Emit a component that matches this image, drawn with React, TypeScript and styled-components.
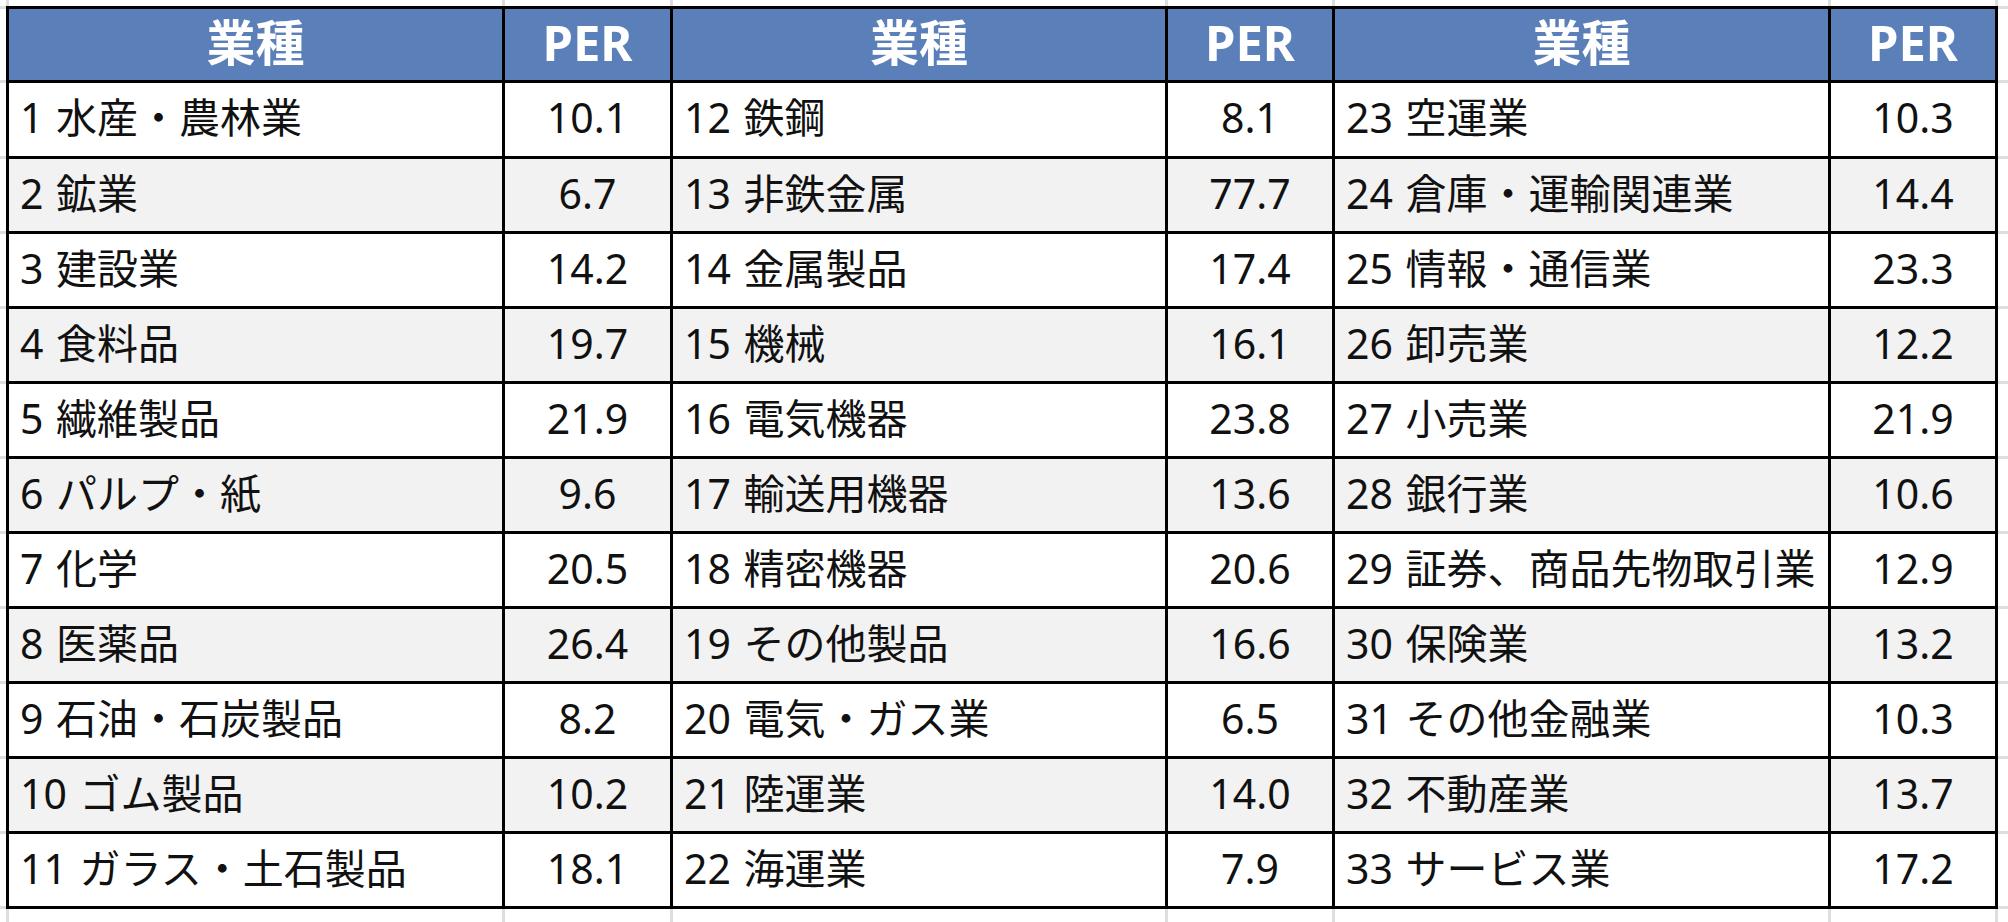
import React from "react";
import styled, { createGlobalStyle } from "styled-components";

const GlobalStyle = createGlobalStyle`
  html, body {
    margin: 0;
    padding: 0;
    background: #ffffff;
    overflow: hidden;
  }
  body {
    font-family: "Noto Sans", "Noto Sans CJK JP", sans-serif;
  }
`;

const COLS = "493px 165px 492px 164px 493px 164px";

const Sheet = styled.div`
  display: grid;
  width: 2008px;
  height: 922px;
  background: #dedede;
  gap: 3px;
  grid-template-columns: 6px ${COLS} 1fr;
  grid-template-rows: 6px 71px 73px repeat(10, 72px) 1fr;
  overflow: hidden;
`;

const Filler = styled.div`
  background: #ffffff;
`;

const Table = styled.div`
  grid-column: 2 / 8;
  grid-row: 2 / 14;
  margin: -3px;
  display: grid;
  padding: 3px;
  gap: 3px;
  background: #000000;
  grid-template-columns: ${COLS};
  grid-template-rows: 71px 73px repeat(10, 72px);
`;

const HeaderCell = styled.div`
  background: #5b7fb9;
  color: #ffffff;
  font-weight: 700;
  font-size: 49px;
  line-height: 1;
  display: flex;
  align-items: center;
  justify-content: center;
  padding-bottom: 4px;
  box-sizing: border-box;
`;

const Cell = styled.div<{ $alt: boolean }>`
  background: ${(p) => (p.$alt ? "#f2f2f2" : "#ffffff")};
  color: #111111;
  font-size: 41px;
  line-height: 1;
  display: flex;
  align-items: center;
  white-space: nowrap;
  overflow: hidden;
  box-sizing: border-box;
  padding-bottom: 4px;
`;

const NameCell = styled(Cell)`
  justify-content: flex-start;
  padding-left: 11px;
  word-spacing: 2px;
`;

const ValueCell = styled(Cell)`
  justify-content: center;
`;

type Row = [string, string];

const groups: Row[][] = [
  [
    ["1 水産・農林業", "10.1"],
    ["2 鉱業", "6.7"],
    ["3 建設業", "14.2"],
    ["4 食料品", "19.7"],
    ["5 繊維製品", "21.9"],
    ["6 パルプ・紙", "9.6"],
    ["7 化学", "20.5"],
    ["8 医薬品", "26.4"],
    ["9 石油・石炭製品", "8.2"],
    ["10 ゴム製品", "10.2"],
    ["11 ガラス・土石製品", "18.1"],
  ],
  [
    ["12 鉄鋼", "8.1"],
    ["13 非鉄金属", "77.7"],
    ["14 金属製品", "17.4"],
    ["15 機械", "16.1"],
    ["16 電気機器", "23.8"],
    ["17 輸送用機器", "13.6"],
    ["18 精密機器", "20.6"],
    ["19 その他製品", "16.6"],
    ["20 電気・ガス業", "6.5"],
    ["21 陸運業", "14.0"],
    ["22 海運業", "7.9"],
  ],
  [
    ["23 空運業", "10.3"],
    ["24 倉庫・運輸関連業", "14.4"],
    ["25 情報・通信業", "23.3"],
    ["26 卸売業", "12.2"],
    ["27 小売業", "21.9"],
    ["28 銀行業", "10.6"],
    ["29 証券、商品先物取引業", "12.9"],
    ["30 保険業", "13.2"],
    ["31 その他金融業", "10.3"],
    ["32 不動産業", "13.7"],
    ["33 サービス業", "17.2"],
  ],
];

export default function App() {
  const fillers = Array.from({ length: 14 * 8 - 6 * 12 }, (_, i) => (
    <Filler key={`f${i}`} />
  ));
  return (
    <>
      <GlobalStyle />
      <Sheet>
        <Table>
          {groups.map((_, g) => (
            <React.Fragment key={`h${g}`}>
              <HeaderCell>業種</HeaderCell>
              <HeaderCell>PER</HeaderCell>
            </React.Fragment>
          ))}
          {groups[0].map((_, r) =>
            groups.map((grp, g) => (
              <React.Fragment key={`${r}-${g}`}>
                <NameCell $alt={r % 2 === 1}>{grp[r][0]}</NameCell>
                <ValueCell $alt={r % 2 === 1}>{grp[r][1]}</ValueCell>
              </React.Fragment>
            ))
          )}
        </Table>
        {fillers}
      </Sheet>
    </>
  );
}
